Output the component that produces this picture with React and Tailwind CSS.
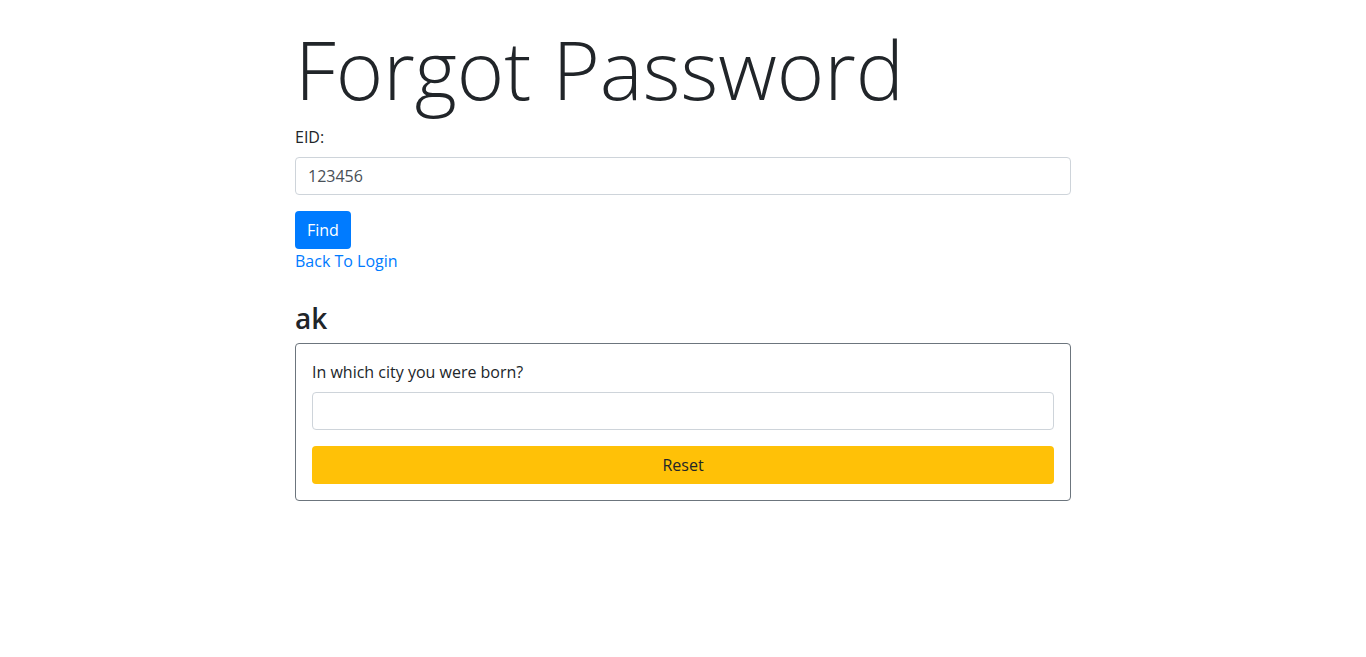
import React from "react";

export default function App() {
  return (
    <div className="min-h-screen bg-white text-[#212529] font-['Open_Sans',sans-serif] text-[16px] leading-6">
      <div className="mx-auto w-[776px] pt-[20px]">
        <h1 className="text-[81px] font-light leading-[97px] mb-2 whitespace-nowrap">Forgot Password</h1>

        <label className="block mb-2">EID:</label>
        <input
          className="block w-full h-[38px] px-3 border border-[#ced4da] rounded text-[#495057] mb-4 outline-none"
          defaultValue="123456"
        />
        <button className="block h-[38px] px-3 rounded bg-[#007bff] text-white">Find</button>
        <a href="#" className="block text-[#007bff]">Back To Login</a>

        <h3 className="mt-[28px] mb-2 text-[28px] font-semibold leading-[34px]">ak</h3>
        <div className="border border-[#6c757d] rounded p-4">
          <label className="block mb-2">In which city you were born?</label>
          <input className="block w-full h-[38px] px-3 border border-[#ced4da] rounded text-[#495057] mb-4 outline-none" />
          <button className="block w-full h-[38px] rounded bg-[#ffc107] text-[#212529]">Reset</button>
        </div>
      </div>
    </div>
  );
}
